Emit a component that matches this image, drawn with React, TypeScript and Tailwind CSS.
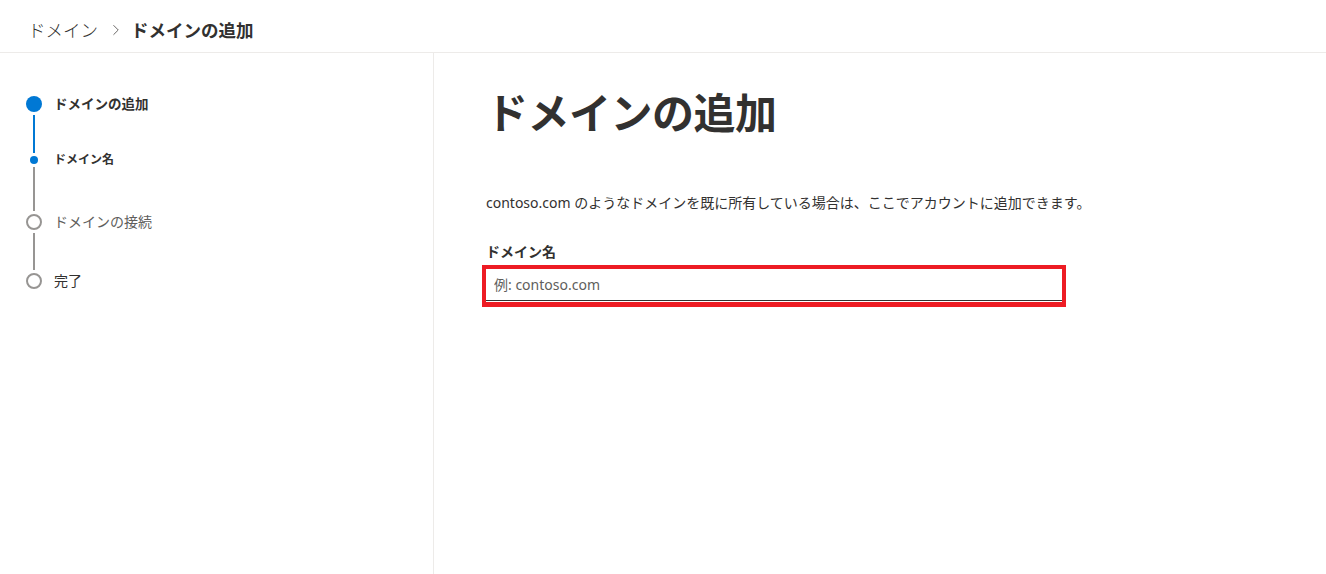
import { ChevronRight } from "lucide-react";

const font = {
  fontFamily: '"Noto Sans", "Noto Sans CJK JP", sans-serif',
};

export default function App() {
  return (
    <div className="flex h-[574px] w-full flex-col bg-white text-[#323130]" style={font}>
      {/* breadcrumb */}
      <header className="flex h-[53px] shrink-0 items-center border-b border-[#edebe9] pl-[28px] pt-[7px]">
        <span className="text-[17.5px] font-light leading-6">ドメイン</span>
        <ChevronRight className="ml-[9px] mr-[6px] h-[18px] w-[18px] text-[#605e5c]" strokeWidth={1.25} />
        <span className="text-[17.5px] font-bold leading-6">ドメインの追加</span>
      </header>

      <div className="flex min-h-0 flex-1">
        {/* wizard steps */}
        <aside className="w-[434px] shrink-0 border-r border-[#edebe9] pl-[26px] pt-[43px]">
          <div className="flex h-4 items-center gap-[12px]">
            <div className="h-4 w-4 shrink-0 rounded-full bg-[#0078d4]" />
            <span className="text-[13.5px] font-bold leading-4">ドメインの追加</span>
          </div>
          <div className="flex w-4 justify-center py-[3px]">
            <div className="h-[38px] w-[2px] bg-[#0078d4]" />
          </div>
          <div className="flex h-2 items-center gap-[12px]">
            <div className="flex h-2 w-4 shrink-0 justify-center">
              <div className="h-2 w-2 rounded-full bg-[#0078d4]" />
            </div>
            <span className="text-[12px] font-bold leading-4">ドメイン名</span>
          </div>
          <div className="flex w-4 justify-center py-[3px]">
            <div className="h-[44px] w-[2px] bg-[#979593]" />
          </div>
          <div className="flex h-4 items-center gap-[12px]">
            <div className="h-4 w-4 shrink-0 rounded-full border-2 border-[#979593]" />
            <span className="text-[14px] leading-4 text-[#605e5c]">ドメインの接続</span>
          </div>
          <div className="flex w-4 justify-center py-[3px]">
            <div className="h-[37px] w-[2px] bg-[#979593]" />
          </div>
          <div className="flex h-4 items-center gap-[12px]">
            <div className="h-4 w-4 shrink-0 rounded-full border-2 border-[#979593]" />
            <span className="text-[14px] leading-4">完了</span>
          </div>
        </aside>

        {/* content */}
        <main className="flex-1 pl-[52px] pt-[35px]">
          <h1 className="text-[42px] font-bold leading-[50px] tracking-[-0.5px]">ドメインの追加</h1>
          <p className="mt-[55px] text-[14px] leading-5">
            contoso.com のようなドメインを既に所有している場合は、ここでアカウントに追加できます。
          </p>
          <label className="mt-[29px] block text-[14px] font-bold leading-5">ドメイン名</label>
          <div className="-ml-1 mt-[3px] w-[584px] border-4 border-b-[5px] border-[#ed1c24] pb-px">
            <input
              className="h-8 w-full border-b border-[#323130] px-2 text-[14px] outline-none placeholder:text-[#605e5c]"
              placeholder="例: contoso.com"
              style={font}
            />
          </div>
        </main>
      </div>
    </div>
  );
}
